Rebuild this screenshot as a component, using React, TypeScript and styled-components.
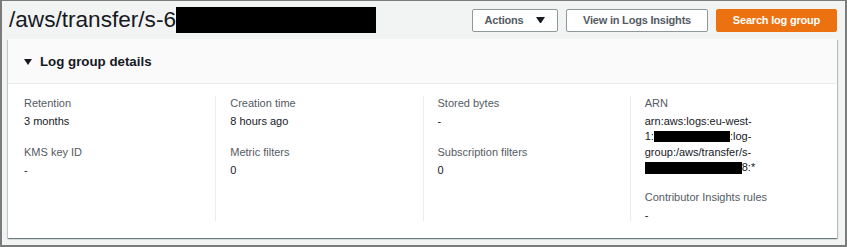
import styled, { createGlobalStyle } from "styled-components"

const GlobalStyle = createGlobalStyle`
    html, body {
        margin: 0;
        padding: 0;
        background: #ffffff;
    }
    * {
        box-sizing: border-box;
    }
`

const Frame = styled.div`
    width: 847px;
    height: 247px;
    background-color: #f2f3f3;
    border: 2px solid #7b7b7b;
    border-top-width: 1px;
    font-family: "Liberation Sans", Arial, sans-serif;
    color: #16191f;
    overflow: hidden;
`

const TopBar = styled.div`
    display: flex;
    align-items: center;
    justify-content: space-between;
    height: 37px;
    padding: 0 8px 0 7px;
`

const Title = styled.h1`
    display: flex;
    align-items: center;
    margin: 0;
    font-size: 22.6px;
    font-weight: 400;
    line-height: 28px;
    color: #16191f;
`

const Redacted = styled.span<{ $w: number; $h: number }>`
    display: inline-block;
    width: ${(p) => p.$w}px;
    height: ${(p) => p.$h}px;
    background-color: #000;
    vertical-align: middle;
`

const Actions = styled.div`
    display: flex;
    gap: 8px;
    margin-top: 1px;
`

const Button = styled.button<{ $primary?: boolean; $w: number }>`
    display: flex;
    align-items: center;
    justify-content: center;
    gap: 13px;
    width: ${(p) => p.$w}px;
    height: 23px;
    padding: 0;
    font-family: "Liberation Sans", Arial, sans-serif;
    font-size: 11px;
    font-weight: 700;
    letter-spacing: -0.2px;
    color: ${(p) => (p.$primary ? "#ffffff" : "#545b64")};
    background-color: ${(p) => (p.$primary ? "#ec7211" : "#ffffff")};
    border: 1px solid ${(p) => (p.$primary ? "#ec7211" : "#8d999a")};
    border-radius: 2px;
    cursor: pointer;
`

const Card = styled.section`
    margin: 1px 8px 0 6px;
    height: 199px;
    background-color: #ffffff;
    box-shadow: 0 1px 1px 0 rgba(0, 28, 36, 0.35), 1px 1px 1px 0 rgba(0, 28, 36, 0.2),
        -1px 1px 1px 0 rgba(0, 28, 36, 0.15);
`

const CardHeader = styled.div`
    display: flex;
    align-items: center;
    gap: 8px;
    height: 45px;
    padding: 1px 0 0 16px;
    background-color: #fafafa;
    border-bottom: 1px solid #eaeded;
    font-size: 13.3px;
    font-weight: 700;
`

const Caret = styled.svg`
    width: 8px;
    height: 6px;
    fill: #16191f;
`

const Grid = styled.div`
    display: grid;
    grid-template-columns: repeat(4, 1fr);
    align-items: start;
    padding-top: 12px;
`

const Column = styled.div<{ $first?: boolean }>`
    height: 125px;
    padding: 0 15px 0 ${(p) => (p.$first ? 16 : 14)}px;
    border-left: ${(p) => (p.$first ? "none" : "1px solid #eaeded")};
`

const Inner = styled.div`
    margin-top: -2px;
`

const Field = styled.div`
    margin-bottom: 13px;
    font-size: 11px;
`

const Label = styled.div`
    line-height: 18px;
    color: #545b64;
`

const Value = styled.div<{ $tight?: boolean }>`
    line-height: ${(p) => (p.$tight ? "15.3px" : "18px")};
    padding-top: ${(p) => (p.$tight ? 2 : 0)}px;
    color: #16191f;
`

const ArnLine = styled.div`
    display: flex;
    align-items: center;
    white-space: nowrap;
`

const DownCaret = ({ size = 8 }: { size?: number }) => (
    <Caret viewBox="0 0 8 6" style={{ width: size, height: size * 0.75 }}>
        <polygon points="0,0 8,0 4,6" />
    </Caret>
)

export default function App() {
    return (
        <>
            <GlobalStyle />
            <Frame>
                <TopBar>
                    <Title>
                        /aws/transfer/s-6<Redacted $w={200} $h={26} />
                    </Title>
                    <Actions>
                        <Button type="button" $w={86}>
                            Actions <DownCaret size={9} />
                        </Button>
                        <Button type="button" $w={142}>View in Logs Insights</Button>
                        <Button type="button" $w={121} $primary>Search log group</Button>
                    </Actions>
                </TopBar>
                <Card>
                    <CardHeader>
                        <DownCaret />
                        Log group details
                    </CardHeader>
                    <Grid>
                        <Column $first>
                            <Inner>
                                <Field>
                                    <Label>Retention</Label>
                                    <Value>3 months</Value>
                                </Field>
                                <Field>
                                    <Label>KMS key ID</Label>
                                    <Value>-</Value>
                                </Field>
                            </Inner>
                        </Column>
                        <Column>
                            <Inner>
                                <Field>
                                    <Label>Creation time</Label>
                                    <Value>8 hours ago</Value>
                                </Field>
                                <Field>
                                    <Label>Metric filters</Label>
                                    <Value>0</Value>
                                </Field>
                            </Inner>
                        </Column>
                        <Column>
                            <Inner>
                                <Field>
                                    <Label>Stored bytes</Label>
                                    <Value>-</Value>
                                </Field>
                                <Field>
                                    <Label>Subscription filters</Label>
                                    <Value>0</Value>
                                </Field>
                            </Inner>
                        </Column>
                        <Column>
                            <Inner>
                                <Field>
                                    <Label>ARN</Label>
                                    <Value $tight>
                                        <ArnLine>arn:aws:logs:eu-west-</ArnLine>
                                        <ArnLine>
                                            1:<Redacted $w={76} $h={11} />:log-
                                        </ArnLine>
                                        <ArnLine>group:/aws/transfer/s-</ArnLine>
                                        <ArnLine>
                                            <Redacted $w={97} $h={12} />8:*
                                        </ArnLine>
                                    </Value>
                                </Field>
                                <Field>
                                    <Label>Contributor Insights rules</Label>
                                    <Value>-</Value>
                                </Field>
                            </Inner>
                        </Column>
                    </Grid>
                </Card>
            </Frame>
        </>
    )
}
